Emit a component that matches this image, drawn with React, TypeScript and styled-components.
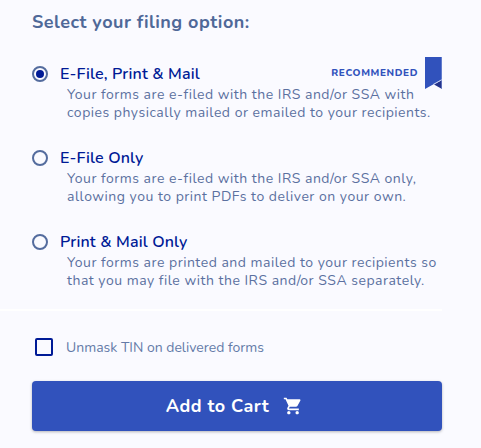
import React, { useState } from 'react';
import styled, { createGlobalStyle } from 'styled-components';

const GlobalStyle = createGlobalStyle`
  * { box-sizing: border-box; }
  body {
    margin: 0;
    background: #fafaff;
    font-family: Nunito, Lato, sans-serif;
    color: #546a9b;
  }
`;

const Page = styled.main`
  width: 481px;
  height: 448px;
  overflow: hidden;
  background: #fafaff;
`;

const Heading = styled.h2`
  margin: 0;
  padding: 10px 0 0 32px;
  font-size: 18px;
  font-weight: 700;
  line-height: 24px;
  letter-spacing: 0.5px;
  color: #4f6898;
`;

const OptionList = styled.div`
  display: flex;
  flex-direction: column;
  gap: 24px;
  padding: 30px 39px 0 32px;
`;

const Option = styled.div`
  height: 60px;
  cursor: pointer;
`;

const OptionHeader = styled.div`
  display: flex;
  align-items: center;
  height: 20px;
`;

const Radio = styled.span`
  display: flex;
  align-items: center;
  justify-content: center;
  flex: none;
  width: 16px;
  height: 16px;
  margin-right: 12px;
  border: 2px solid #546c9e;
  border-radius: 50%;
`;

const RadioDot = styled.span`
  width: 8px;
  height: 8px;
  border-radius: 50%;
  background: #001a96;
`;

const OptionTitle = styled.span`
  font-size: 16px;
  font-weight: 600;
  line-height: 20px;
  letter-spacing: 0.15px;
  color: #001a96;
`;

const Recommended = styled.span`
  display: flex;
  align-items: center;
  gap: 7px;
  height: 32px;
  margin: -2px 0 0 auto;
  font-size: 10px;
  font-weight: 800;
  letter-spacing: 0.6px;
  color: #3152bc;
`;

const Ribbon = styled.svg`
  display: block;
  width: 17px;
  height: 32px;
`;

const Description = styled.p`
  margin: 2px 0 0;
  padding-left: 35px;
  font-size: 14px;
  line-height: 18px;
  letter-spacing: 0.5px;
  color: #5b70a0;
`;

const Line = styled.span`
  display: block;
  white-space: nowrap;
`;

const Divider = styled.hr`
  width: 442px;
  height: 2px;
  margin: 17px 0 0;
  border: 0;
  background: #ffffff;
`;

const CheckRow = styled.label`
  display: flex;
  align-items: center;
  gap: 13px;
  height: 18px;
  margin: 27px 0 0 35px;
  font-size: 14px;
  color: #647aa8;
  cursor: pointer;
`;

const CheckBox = styled.span<{ $on: boolean }>`
  width: 18px;
  height: 18px;
  border: 2px solid #001a96;
  border-radius: 2px;
  background: ${(p) => (p.$on ? '#001a96' : 'transparent')};
`;

const CartButton = styled.button`
  display: flex;
  align-items: center;
  justify-content: center;
  gap: 14px;
  width: 410px;
  height: 50px;
  margin: 25px 0 0 32px;
  padding: 0 5px 0 0;
  border: 0;
  border-radius: 4px;
  background: #3152bc;
  box-shadow: 0 1px 3px rgba(0, 0, 0, 0.28);
  color: #ffffff;
  font-family: inherit;
  font-size: 18px;
  font-weight: 700;
  letter-spacing: 0.5px;
  cursor: pointer;
`;

const CartIcon = styled.svg`
  display: block;
  width: 20px;
  height: 20px;
`;

type OptionData = { title: string; lines: string[]; recommended?: boolean };

const options: OptionData[] = [
  {
    title: 'E-File, Print & Mail',
    recommended: true,
    lines: [
      'Your forms are e-filed with the IRS and/or SSA with',
      'copies physically mailed or emailed to your recipients.',
    ],
  },
  {
    title: 'E-File Only',
    lines: [
      'Your forms are e-filed with the IRS and/or SSA only,',
      'allowing you to print PDFs to deliver on your own.',
    ],
  },
  {
    title: 'Print & Mail Only',
    lines: [
      'Your forms are printed and mailed to your recipients so',
      'that you may file with the IRS and/or SSA separately.',
    ],
  },
];

function RibbonMark() {
  return (
    <Ribbon viewBox="0 0 17 32">
      <path d="M0 0H17V22.5L0 32Z" fill="#3152bc" />
      <path d="M9 27.6 17 23V32Z" fill="#23328c" />
      <path d="M8 27.6 17 22.5" stroke="#c3cdf0" strokeWidth="0.9" />
      <path d="M16.6 0V32" stroke="#8fa1dc" strokeWidth="0.6" />
    </Ribbon>
  );
}

export default function App() {
  const [selected, setSelected] = useState(0);
  const [unmask, setUnmask] = useState(false);
  return (
    <Page>
      <GlobalStyle />
      <Heading>Select your filing option:</Heading>
      <OptionList role="radiogroup">
        {options.map((o, i) => (
          <Option key={o.title} role="radio" aria-checked={i === selected} onClick={() => setSelected(i)}>
            <OptionHeader>
              <Radio>{i === selected && <RadioDot />}</Radio>
              <OptionTitle>{o.title}</OptionTitle>
              {o.recommended && (
                <Recommended>
                  RECOMMENDED
                  <RibbonMark />
                </Recommended>
              )}
            </OptionHeader>
            <Description>
              {o.lines.map((text) => (
                <Line key={text}>{text}</Line>
              ))}
            </Description>
          </Option>
        ))}
      </OptionList>
      <Divider />
      <CheckRow onClick={() => setUnmask(!unmask)}>
        <CheckBox $on={unmask} role="checkbox" aria-checked={unmask} />
        Unmask TIN on delivered forms
      </CheckRow>
      <CartButton type="button">
        Add to Cart
        <CartIcon viewBox="0 0 24 24" fill="currentColor">
          <path d="M7 18c-1.1 0-1.99.9-1.99 2S5.9 22 7 22s2-.9 2-2-.9-2-2-2zM1 2v2h2l3.6 7.59-1.35 2.45c-.16.28-.25.61-.25.96 0 1.1.9 2 2 2h12v-2H7.42c-.14 0-.25-.11-.25-.25l.03-.12.9-1.63h7.45c.75 0 1.41-.41 1.75-1.03l3.58-6.49c.08-.14.12-.31.12-.48 0-.55-.45-1-1-1H5.21l-.94-2H1zm16 16c-1.1 0-1.99.9-1.99 2s.89 2 1.99 2 2-.9 2-2-.9-2-2-2z" />
        </CartIcon>
      </CartButton>
    </Page>
  );
}
